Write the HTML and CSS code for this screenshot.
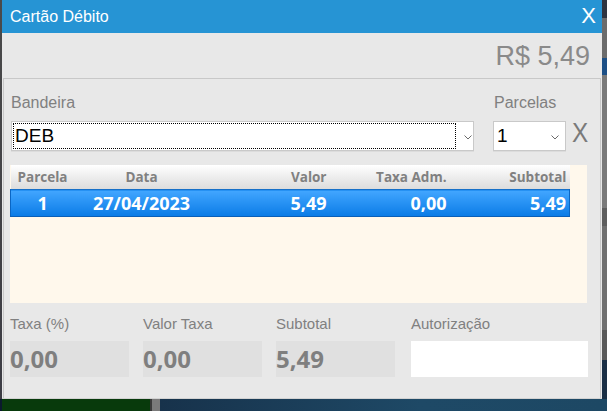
FILE: index.html
```html
<!DOCTYPE html>
<html lang="pt-BR">
<head>
<meta charset="utf-8">
<title>Cartão Débito</title>
<link rel="stylesheet" href="styles.css">
</head>
<body>
<div class="screen">
  <div class="dialog">
    <div class="titlebar">
      <span class="title">Cartão Débito</span>
      <span class="close">X</span>
    </div>
    <div class="amount">R$ 5,49</div>
    <div class="panel">
      <div class="row-top">
        <div class="field field-bandeira">
          <div class="label">Bandeira</div>
          <div class="select select-wide">
            <span class="select-value focused">DEB</span>
            <svg class="chev" width="8" height="5" viewBox="0 0 8 5"><polyline points="0.5,0.5 4,4 7.5,0.5" fill="none" stroke="#6a6a6a" stroke-width="1"/></svg>
          </div>
        </div>
        <div class="field field-parcelas">
          <div class="label">Parcelas</div>
          <div class="parc-row">
            <div class="select select-narrow">
              <span class="select-value">1</span>
              <svg class="chev" width="8" height="5" viewBox="0 0 8 5"><polyline points="0.5,0.5 4,4 7.5,0.5" fill="none" stroke="#6a6a6a" stroke-width="1"/></svg>
            </div>
            <span class="clear">X</span>
          </div>
        </div>
      </div>
      <div class="grid">
        <table class="table">
          <thead>
            <tr>
              <th class="c-parc">Parcela</th>
              <th class="c-data">Data</th>
              <th class="c-num c-valor">Valor</th>
              <th class="c-num c-taxa">Taxa Adm.</th>
              <th class="c-num c-sub">Subtotal</th>
            </tr>
          </thead>
          <tbody>
            <tr class="selected">
              <td class="c-parc">1</td>
              <td class="c-data">27/04/2023</td>
              <td class="c-num">5,49</td>
              <td class="c-num">0,00</td>
              <td class="c-num">5,49</td>
            </tr>
          </tbody>
        </table>
      </div>
      <div class="totals">
        <div class="tfield">
          <div class="tlabel">Taxa (%)</div>
          <div class="tbox">0,00</div>
        </div>
        <div class="tfield">
          <div class="tlabel">Valor Taxa</div>
          <div class="tbox">0,00</div>
        </div>
        <div class="tfield">
          <div class="tlabel">Subtotal</div>
          <div class="tbox">5,49</div>
        </div>
        <div class="tfield tfield-auth">
          <div class="tlabel">Autorização</div>
          <div class="tbox tbox-input"></div>
        </div>
      </div>
    </div>
  </div>
</div>
</body>
</html>
```

FILE: styles.css
```css
* { box-sizing: border-box; }

html, body {
  margin: 0;
  padding: 0;
  width: 607px;
  height: 411px;
  overflow: hidden;
}

body {
  font-family: "Liberation Sans", Arial, sans-serif;
}

.screen {
  width: 607px;
  height: 411px;
  background:
    linear-gradient(to right, #0b1a2e 0 2px, #083a0c 2px 150px, #3a3a3a 150px 152px, #7a7a7a 152px 160px, #17324b 160px, #1e4966 420px, #1d4864 100%) left bottom / 100% 12px no-repeat,
    linear-gradient(to bottom, #2e3440 0 18px, #6c6c6c 18px 58px, #1c4f86 58px 75px, #7a7a7a 75px 208px, #5e5e5e 208px 226px, #707070 226px 330px, #5a5a5a 330px 360px, #1a2f45 360px 100%) right top / 5px 100% no-repeat,
    linear-gradient(to bottom, #4a4a4a, #3c3c44) left top / 2px 100% no-repeat,
    #1d4864;
}

.dialog {
  margin-left: 2px;
  width: 600px;
  height: 399px;
  background: #e8e8e8;
  border-bottom: 1px solid #d2d2d2;
  display: flex;
  flex-direction: column;
}

.titlebar {
  height: 33px;
  background: #2694d4;
  display: flex;
  align-items: center;
  justify-content: space-between;
  padding: 0 6px 0 8px;
  color: #ffffff;
  flex-shrink: 0;
}

.title {
  font-size: 16px;
}

.close {
  font-size: 22px;
  line-height: 22px;
  margin-top: -1px;
}

.amount {
  height: 45px;
  flex-shrink: 0;
  text-align: right;
  padding: 2px 12px 0 0;
  font-size: 27px;
  line-height: 43px;
  color: #8a8a8a;
}

.panel {
  flex: 1;
  margin: 0 1px 0 1px;
  border: 1px solid #c8c8c8;
  border-bottom: none;
  padding: 15px 0 0 6px;
  display: flex;
  flex-direction: column;
}

.row-top {
  display: flex;
  gap: 19px;
}

.label {
  font-size: 16px;
  line-height: 18px;
  color: #808080;
  padding-left: 1px;
}

.field-bandeira {
  width: 464px;
}

.select {
  margin-top: 9px;
  height: 30px;
  background: #ffffff;
  border: 1px solid #c9c9c9;
  box-shadow: 0 1px 0 rgba(0,0,0,0.05);
  display: flex;
  align-items: center;
  padding: 1px 0 1px 1px;
}

.select-wide {
  margin-left: 1px;
  width: 463px;
}

.select-narrow {
  width: 73px;
}

.select-value {
  font-family: "Liberation Sans", Arial, sans-serif;
  font-size: 19px;
  color: #000000;
  height: 100%;
  display: flex;
  align-items: center;
  padding-left: 2px;
  flex: 1;
}

.focused {
  outline: 1px dotted #000000;
  outline-offset: -1px;
  flex: 0 0 443px;
}

.chev {
  margin: 2px 6px 0 8px;
  flex-shrink: 0;
}

.select-narrow .chev {
  margin: 2px 6px 0 0;
}

.parc-row {
  display: flex;
  align-items: flex-end;
}

.clear {
  font-size: 27px;
  line-height: 27px;
  color: #7a7a7a;
  margin-left: 6px;
  margin-bottom: 4px;
  transform: scaleX(0.9);
  transform-origin: left;
}

.grid {
  margin-top: 14px;
  width: 577px;
  height: 138px;
  background: #fff8ec;
  flex-shrink: 0;
}

.table {
  width: 559px;
  border-collapse: collapse;
  table-layout: fixed;
  font-family: "Open Sans", "Liberation Sans", sans-serif;
  font-weight: 700;
}

.table th {
  height: 24px;
  font-size: 13.5px;
  line-height: 24px;
  color: #808080;
  padding: 0 3px 0 0;
  background: linear-gradient(to bottom, #ffffff, #dcdcdc);
  white-space: nowrap;
}

.c-parc { width: 64px; text-align: center; }
.c-data { width: 134px; text-align: center; }
.c-valor { width: 121px; }
.c-taxa { width: 120px; }
.c-sub { width: 120px; }
.table .c-num { text-align: right; }
.table th.c-parc, .table th.c-data { padding: 0; }

.selected td {
  height: 27px;
  font-size: 18px;
  line-height: 25px;
  color: #ffffff;
  padding: 0 3px 0 0;
  background: linear-gradient(to bottom, #42a6ff, #0a7be6);
  border-top: 1px solid #1670c8;
  border-bottom: 1px solid #0a5fb8;
}

.selected td.c-parc, .selected td.c-data { padding: 0; }
.selected td:first-child { border-left: 1px solid #0a66c4; }
.selected td:last-child { border-right: 1px solid #0a66c4; }

.totals {
  margin-top: 12px;
  display: flex;
  gap: 14px;
}

.tfield {
  width: 119px;
}

.tfield-auth {
  margin-left: 2px;
  width: 177px;
}

.tlabel {
  font-size: 15px;
  line-height: 17px;
  color: #808080;
}

.tbox {
  margin-top: 9px;
  height: 36px;
  background: #e0e0e0;
  font-family: "Open Sans", "Liberation Sans", sans-serif;
  font-weight: 700;
  font-size: 24px;
  line-height: 36px;
  color: #7f7f7f;
}

.tbox-input {
  background: #ffffff;
}
```
